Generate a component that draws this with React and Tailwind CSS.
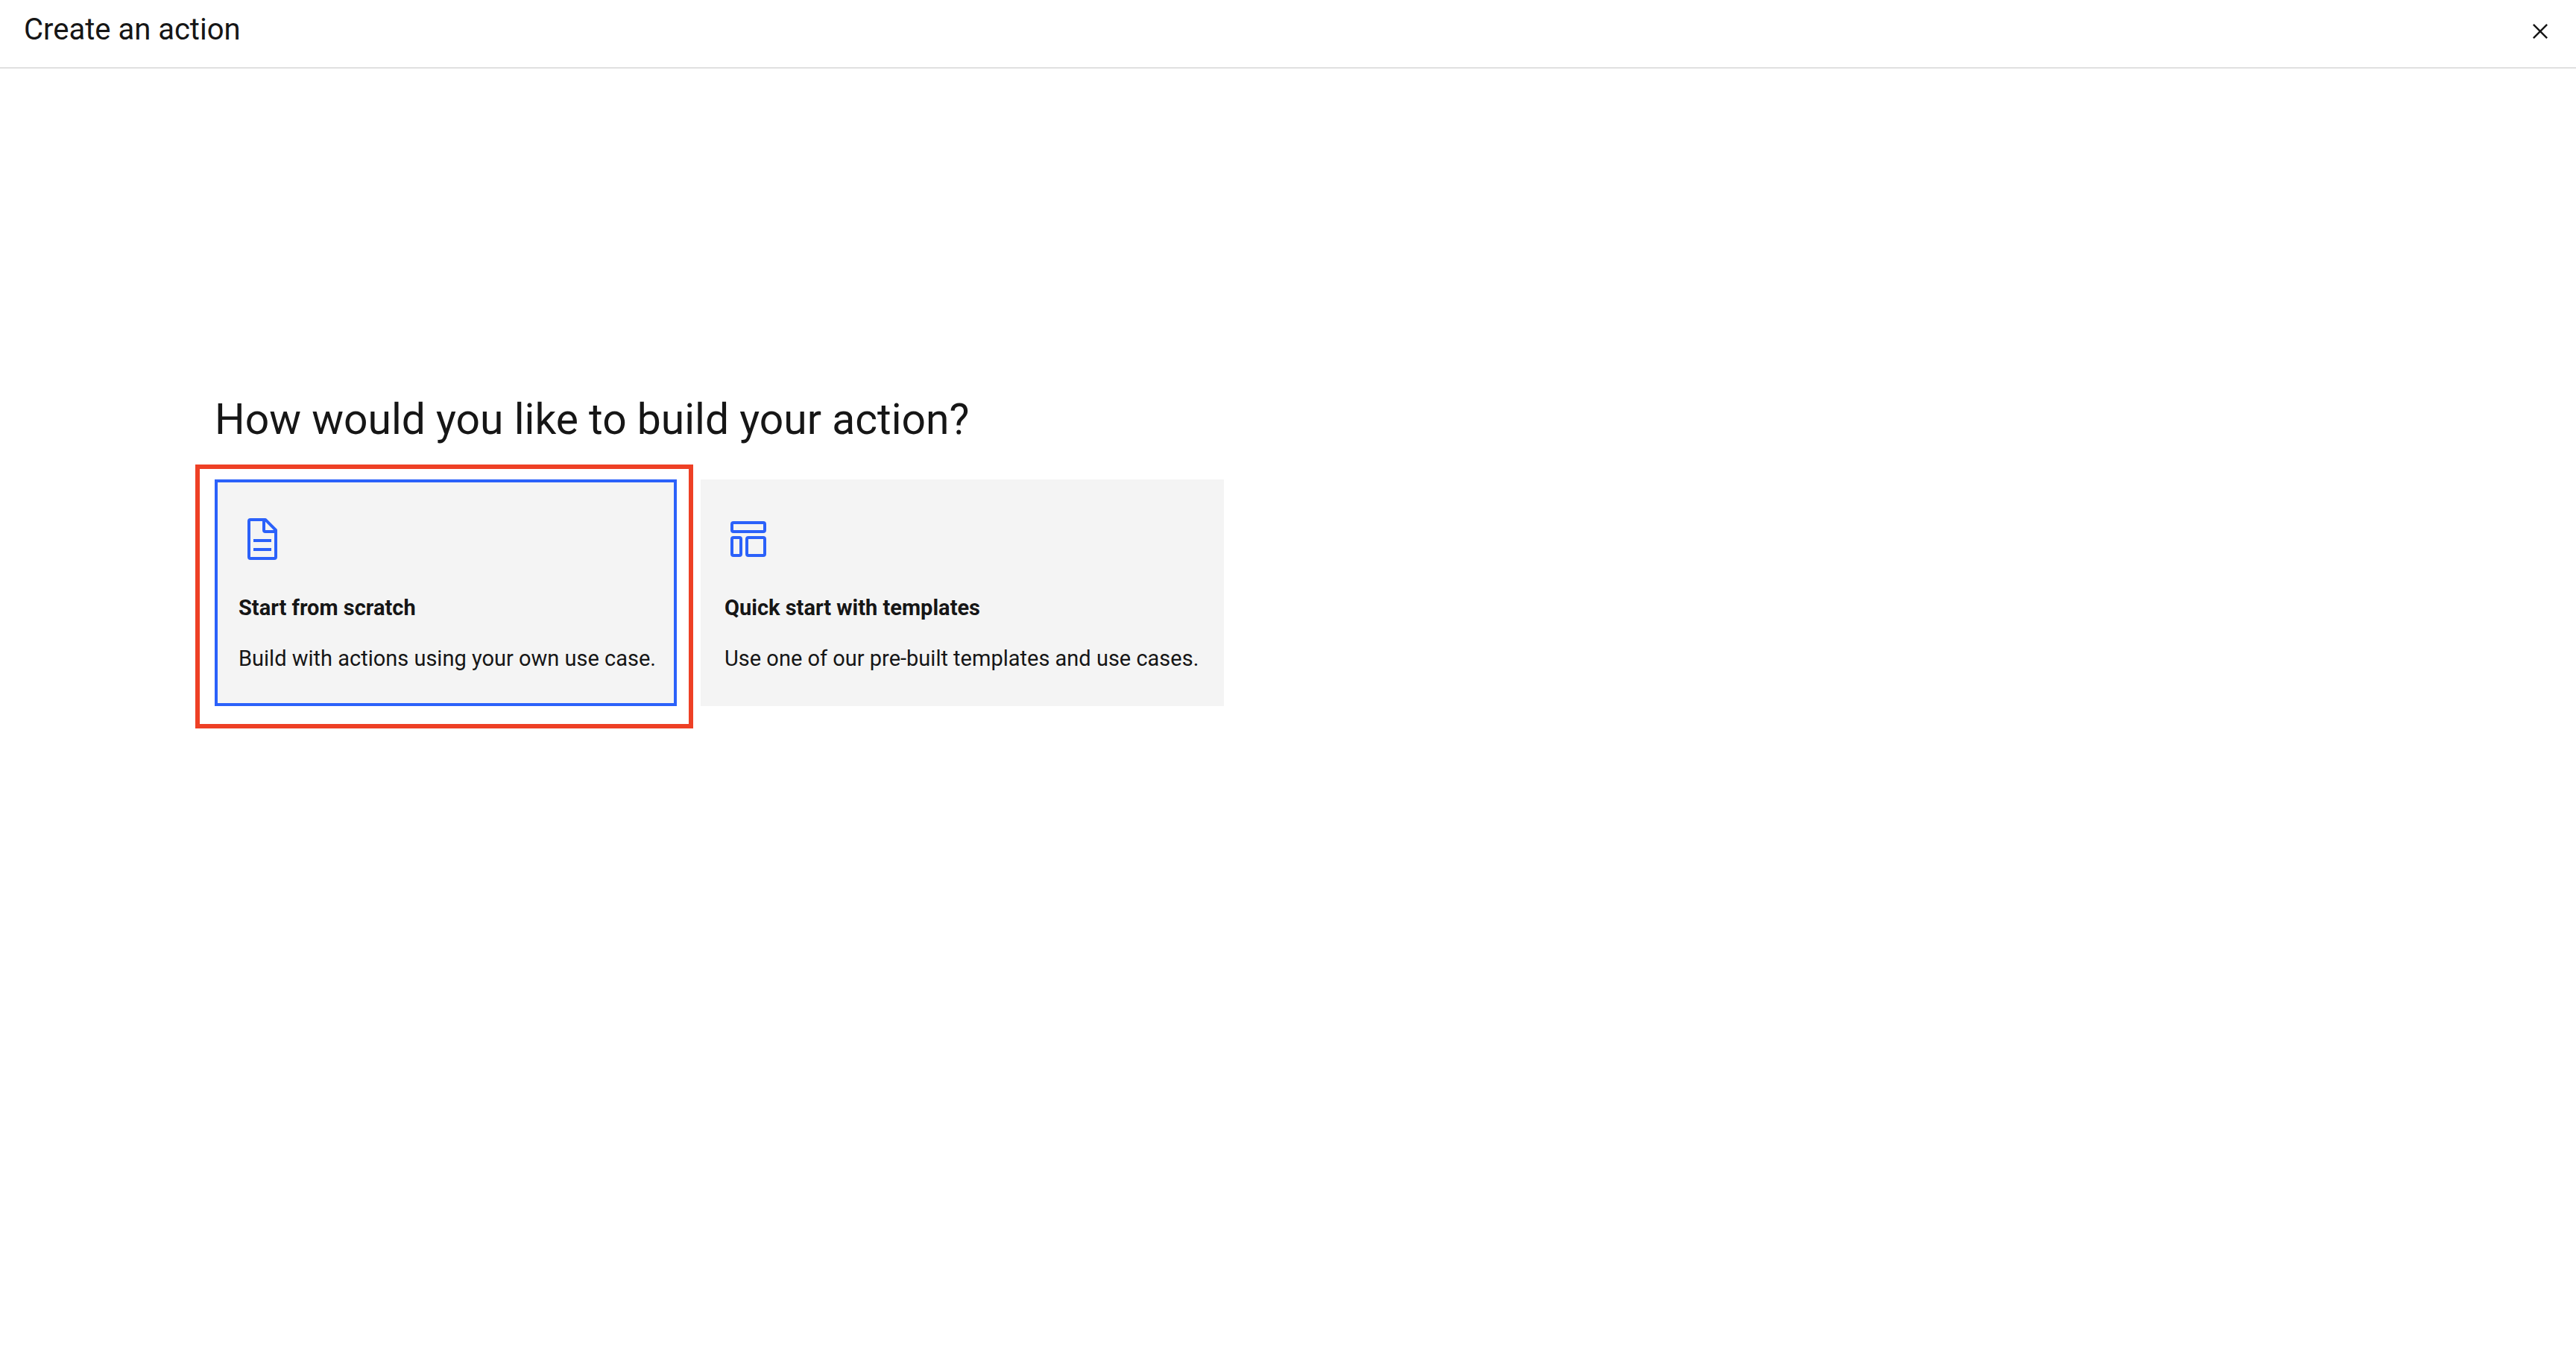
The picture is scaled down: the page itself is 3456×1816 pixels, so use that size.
function CloseIcon() {
  return (
    <svg viewBox="0 0 32 32" className="size-10" fill="currentColor" aria-hidden="true">
      <path d="M24 9.4 22.6 8 16 14.6 9.4 8 8 9.4 14.6 16 8 22.6 9.4 24 16 17.4 22.6 24 24 22.6 17.4 16z" />
    </svg>
  );
}

function DocumentIcon() {
  return (
    <svg viewBox="0 0 32 32" className="size-16" fill="currentColor" aria-hidden="true">
      <path d="M25.7 9.3l-7-7A.9.9 0 0 0 18 2H8a2 2 0 0 0-2 2v24a2 2 0 0 0 2 2h16a2 2 0 0 0 2-2V10a.9.9 0 0 0-.3-.7zM18 4.4l5.6 5.6H18zM24 28H8V4h8v6a2 2 0 0 0 2 2h6z" />
      <path d="M10 22h12v2H10zM10 16h12v2H10z" />
    </svg>
  );
}

function TemplateIcon() {
  return (
    <svg viewBox="0 0 32 32" className="size-16" fill="currentColor" aria-hidden="true">
      <path d="M26 6v4H6V6h20m0-2H6a2 2 0 0 0-2 2v4a2 2 0 0 0 2 2h20a2 2 0 0 0 2-2V6a2 2 0 0 0-2-2zM10 16v10H6V16h4m0-2H6a2 2 0 0 0-2 2v10a2 2 0 0 0 2 2h4a2 2 0 0 0 2-2V16a2 2 0 0 0-2-2zM26 16v10H16V16h10m0-2H16a2 2 0 0 0-2 2v10a2 2 0 0 0 2 2h10a2 2 0 0 0 2-2V16a2 2 0 0 0-2-2z" />
    </svg>
  );
}

function Tile({ icon, title, text, className }) {
  return (
    <button
      type="button"
      className={`flex flex-col items-start border-4 bg-[#f4f4f4] px-7 pt-11 pb-10 text-left text-[29px] leading-10 whitespace-nowrap ${className}`}
    >
      <span className="text-[#2b61fa]">{icon}</span>
      <span className="mt-10 font-bold">{title}</span>
      <span className="mt-7">{text}</span>
    </button>
  );
}

export default function App() {
  return (
    <div className="min-h-screen bg-white font-['Roboto',sans-serif] text-[#161616]">
      <header className="flex items-start justify-between border-b-2 border-[#e0e0e0] pt-3 pr-7 pb-[18px] pl-8">
        <h1 className="text-[40px] leading-[56px]">Create an action</h1>
        <button type="button" aria-label="Close" className="flex h-[60px] items-center">
          <CloseIcon />
        </button>
      </header>
      <main className="px-72 pt-[435px]">
        <h2 className="text-[57px] leading-[72px]">How would you like to build your action?</h2>
        <div className="mt-11 flex items-start gap-8">
          <div className="relative">
            <Tile
              icon={<DocumentIcon />}
              title="Start from scratch"
              text="Build with actions using your own use case."
              className="w-[620px] border-[#2b61fa]"
            />
            <div className="pointer-events-none absolute -top-5 -right-[22px] -bottom-[30px] -left-[26px] border-6 border-[#ee4025]" />
          </div>
          <Tile
            icon={<TemplateIcon />}
            title="Quick start with templates"
            text="Use one of our pre-built templates and use cases."
            className="w-[702px] border-[#f4f4f4]"
          />
        </div>
      </main>
    </div>
  );
}
